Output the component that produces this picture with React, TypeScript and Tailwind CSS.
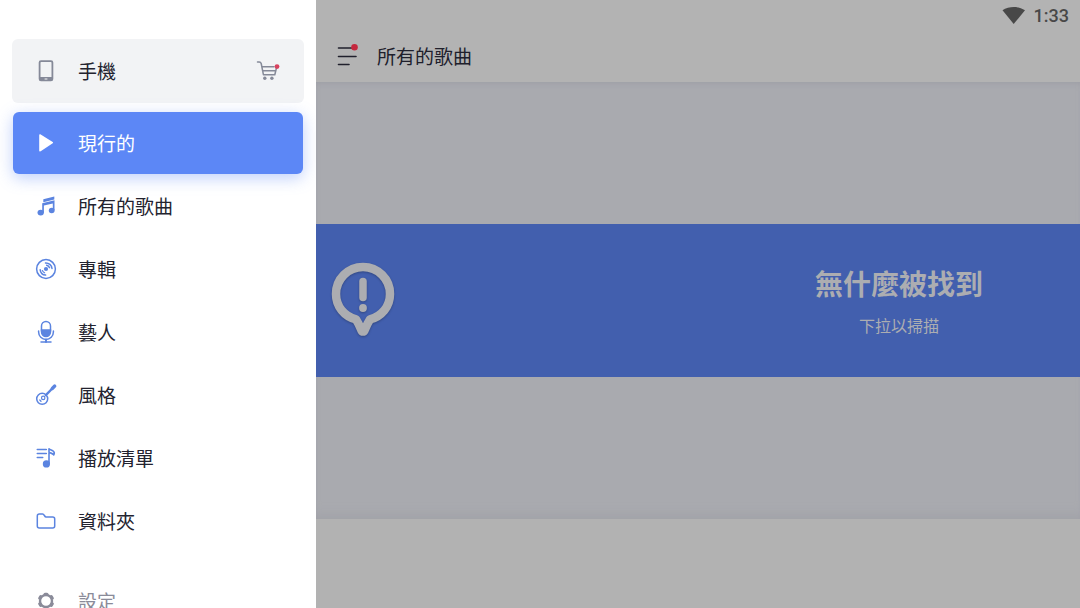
import type { ReactNode } from "react";

const stroke = {
  fill: "none",
  stroke: "currentColor",
  strokeWidth: 1.6,
  strokeLinecap: "round" as const,
  strokeLinejoin: "round" as const,
};

function Icon({ children }: { children: ReactNode }) {
  return (
    <svg className="size-6 shrink-0" viewBox="0 0 24 24" aria-hidden="true">
      {children}
    </svg>
  );
}

const PhoneIcon = () => (
  <Icon>
    <path
      fill="currentColor"
      fillRule="evenodd"
      d="M7 1.2h10a2.3 2.3 0 0 1 2.3 2.3v16.4a2.3 2.3 0 0 1-2.3 2.3H7a2.3 2.3 0 0 1-2.3-2.3V3.5A2.3 2.3 0 0 1 7 1.2ZM7.200 2.900a.7.7 0 0 0-.7.7v14.500h11V3.600a.7.7 0 0 0-.7-.7ZM10.600 19.400v1.200h2.800v-1.200Z"
    />
  </Icon>
);

const PlayIcon = () => (
  <Icon>
    <path fill="currentColor" d="M5.200 4.300c0-.8.8-1.200 1.500-.8l12 7.400c.5.400.5 1 0 1.400l-12 8c-.7.400-1.500 0-1.500-.8Z" />
  </Icon>
);

const SongsIcon = () => (
  <Icon>
    <g fill="currentColor">
      <path d="M9.300 5.200 20.300 2.500v2.900L9.300 8.200Z" />
      <path d="M8.200 9.300 20.500 6.300v9.900h-1.700V9.400l-8.900 2.200v6.900H8.200Z" />
      <ellipse cx="6.700" cy="18.600" rx="3.200" ry="2.900" />
      <ellipse cx="17.700" cy="16.500" rx="2.900" ry="2.700" />
    </g>
  </Icon>
);

const AlbumIcon = () => (
  <Icon>
    <circle {...stroke} strokeWidth={1.5} cx="12" cy="12" r="9.400" />
    <path
      {...stroke}
      strokeWidth={1.5}
      d="M11.500 5.900a6.200 6.200 0 0 1 6.500 5.600M12.700 8.300a4 4 0 0 1 2.800 2.300M6.200 12.800a6 6 0 0 0 5.400 5.300"
    />
    <path {...stroke} strokeWidth={1.2} d="M8.400 13.600a4 4 0 0 0 2.200 2.200" />
    <circle cx="12" cy="12" r="2.100" fill="currentColor" />
  </Icon>
);

const ArtistIcon = () => (
  <Icon>
    <path {...stroke} d="M7.500 11V6a4.500 4.500 0 0 1 9 0v5" strokeWidth={1.5} />
    <path fill="currentColor" d="M6.800 9.200h10.400v2.900a5.200 5.200 0 0 1-10.400 0Z" />
    <path {...stroke} strokeWidth={1.5} d="M4.600 11v1a7.400 7.400 0 0 0 14.800 0v-1M7 22h10" />
    <path {...stroke} strokeWidth={2} d="M12 19.500V22" />
  </Icon>
);

const GenreIcon = () => (
  <Icon>
    <g {...stroke}>
      <circle cx="8.200" cy="15.800" r="5.500" strokeWidth="1.500" />
      <path strokeWidth="2.400" d="m11.800 12.200 6-6.200" />
      <path strokeWidth="3.400" d="m18.300 5.400 2.400-2.300" />
      <circle cx="9.200" cy="14.900" r="1.700" strokeWidth="1.200" />
      <path strokeWidth="1.300" d="m5.800 17 1.200 1.200" />
    </g>
  </Icon>
);

const PlaylistIcon = () => (
  <Icon>
    <path {...stroke} strokeWidth={1.600} d="M3.300 3.500h9M3.300 7.500h9M3.300 11.500h5.400" />
    <path {...stroke} strokeWidth={1.600} d="M15 17.500V2.800c1.200 1.500 5.300 1.300 5.300 4.300 0 .8-.1 1.300-.6 1.900C18.900 7 16.500 7.400 15 6.200" />
    <circle cx="12.400" cy="17.900" r="3.600" fill="currentColor" />
  </Icon>
);

const FolderIcon = () => (
  <Icon>
    <path
      {...stroke}
      strokeWidth={1.5}
      d="M3.300 17V7a2 2 0 0 1 2-2h3.300c1.700 0 1.800 3 3.500 3h6.600a2 2 0 0 1 2 2v7a2 2 0 0 1-2 2H5.300a2 2 0 0 1-2-2Z"
    />
  </Icon>
);

const SettingsIcon = () => (
  <Icon>
    <circle {...stroke} strokeWidth={2.400} cx="12" cy="12" r="6" />
    <path
      {...stroke}
      strokeWidth={3}
      strokeLinecap="round"
      d="M11 5.300h2M11 18.700h2M5.700 9.200l1-1.700M18.300 9.200l-1-1.700M5.700 14.800l1 1.700M18.300 14.800l-1 1.700"
    />
  </Icon>
);

const CartIcon = () => (
  <Icon>
    <path {...stroke} strokeWidth={1.5} d="M1.500 3h1.700c1 0 1.700.6 2 1.500L7.400 15.700h11.400L20.700 8M6 7.800h12M6.500 11.700h13" />
    <circle cx="8.800" cy="19.300" r="1.700" fill="currentColor" />
    <circle cx="15.900" cy="19.300" r="1.700" fill="currentColor" />
    <circle cx="21" cy="7.600" r="2.400" fill="#d9425f" />
  </Icon>
);

const items = [
  { label: "所有的歌曲", icon: <SongsIcon /> },
  { label: "專輯", icon: <AlbumIcon /> },
  { label: "藝人", icon: <ArtistIcon /> },
  { label: "風格", icon: <GenreIcon /> },
  { label: "播放清單", icon: <PlaylistIcon /> },
  { label: "資料夾", icon: <FolderIcon /> },
];

function Drawer() {
  return (
    <aside className="w-[316px] shrink-0 overflow-hidden bg-white px-3 pt-[39px] text-[19px] leading-7 text-[#23232f]">
      <div className="flex h-16 items-center rounded-md bg-[#f2f3f5] pr-6 pl-[22px]">
        <button type="button" className="flex flex-1 items-center gap-5 text-left">
          <span className="text-[#858998]">
            <PhoneIcon />
          </span>
          手機
        </button>
        <button type="button" aria-label="購物車" className="text-[#858998]">
          <CartIcon />
        </button>
      </div>
      <nav className="mt-[9px] flex flex-col">
        <a
          href="#current"
          aria-current="page"
          className="mx-px flex h-[62px] items-center gap-5 rounded-md bg-[#5c87f6] px-[21px] text-white shadow-[0_4px_16px_#5c87f666]"
        >
          <PlayIcon />
          現行的
        </a>
        {items.map((item) => (
          <a key={item.label} href={`#${item.label}`} className="flex h-[63px] items-center gap-5 px-[22px]">
            <span className="text-[#5b84e0]">{item.icon}</span>
            {item.label}
          </a>
        ))}
        <a href="#settings" className="mt-[17px] flex h-[63px] items-center gap-5 px-[22px] text-[#8a8b99]">
          <SettingsIcon />
          設定
        </a>
      </nav>
    </aside>
  );
}

function Header() {
  return (
    <header className="bg-[#b3b3b3]">
      <div className="flex h-8 items-center justify-end gap-2 pr-[11px] text-[#484848]">
        <svg className="h-[18px] w-6" viewBox="0 0 24 18" aria-label="Wi-Fi">
          <path fill="currentColor" d="M.5 3.300C7-1 17-1 23 3.300L11.700 17Z" />
        </svg>
        <time className="font-[Roboto,sans-serif] text-[18px] leading-8 font-medium">1:33</time>
      </div>
      <div className="flex h-12 items-center gap-[17px] pl-5 text-[#20202c]">
        <button type="button" aria-label="選單">
          <svg className="size-6" viewBox="0 0 24 24">
            <path fill="none" stroke="currentColor" strokeWidth="1.600" strokeLinecap="round" d="M2.500 4H17M2.500 12.500h17.500M2.500 20.500H13" />
            <circle cx="18.500" cy="3.300" r="3.300" fill="#c5283e" />
          </svg>
        </button>
        <h1 className="text-[19px] leading-7">所有的歌曲</h1>
      </div>
      <div className="h-0.5" />
    </header>
  );
}

function EmptyBanner() {
  return (
    <section className="flex h-[153px] items-center justify-between bg-[#425fae] pl-[15px] text-[#acadb1]">
      <svg className="mt-[-2px] h-[78px] w-16 drop-shadow-[0_1px_1px_#00000040]" viewBox="0 0 64 78" aria-hidden="true">
        <path
          fill="none"
          stroke="currentColor"
          strokeWidth="8.500"
          strokeLinejoin="round"
          d="M32 6C17 6 5 18 5 33c0 12.500 8.300 22.300 20 25.400Q28 63 30.500 69.500c.6 1.400 2.400 1.400 3 0Q36 63 39 58.400C50.700 55.300 59 45.500 59 33 59 18 47 6 32 6Z"
        />
        <path stroke="currentColor" strokeWidth="7.500" strokeLinecap="round" d="M32 20.500v16" />
        <circle cx="32" cy="47" r="3.900" fill="currentColor" />
      </svg>
      <div className="w-[362px] text-center">
        <h2 className="text-[28px] leading-10 font-bold">無什麼被找到</h2>
        <p className="mt-2 text-[16px] leading-7">下拉以掃描</p>
      </div>
    </section>
  );
}

export default function App() {
  return (
    <div className="flex h-screen overflow-hidden font-['Noto_Sans_CJK_TC',sans-serif]">
      <Drawer />
      <div className="flex min-w-0 flex-1 flex-col bg-[#b2b2b2]">
        <Header />
        <main className="flex flex-1 flex-col justify-center bg-[#a9aaaf] shadow-[inset_0_5px_6px_-4px_#9c9da5,inset_0_-12px_12px_-8px_#a1a2a8]">
          <EmptyBanner />
        </main>
        <footer className="h-[89px] bg-[#b2b2b2]" />
      </div>
    </div>
  );
}
